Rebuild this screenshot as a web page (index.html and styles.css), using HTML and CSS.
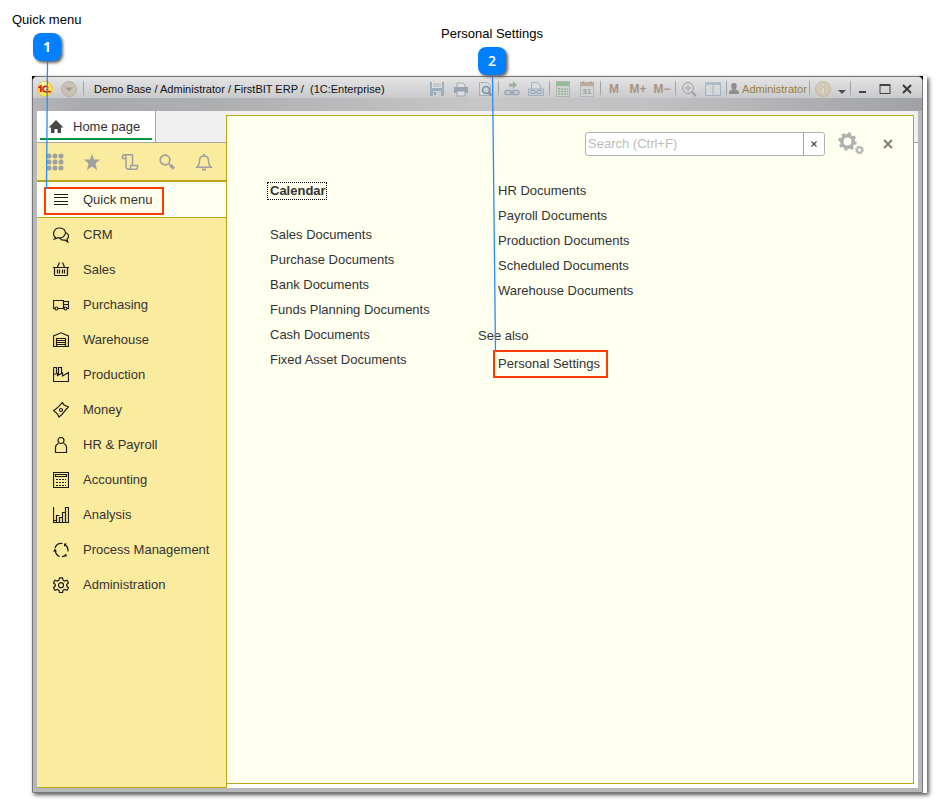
FILE: index.html
```html
<!DOCTYPE html>
<html lang="en">
<head>
<meta charset="utf-8">
<title>FirstBIT ERP - Quick menu</title>
<link rel="stylesheet" href="styles.css">
</head>
<body>
<div class="figure">
<div class="window">
  <header class="titlebar">
    <svg class="logo" width="16" height="16" viewBox="0 0 16 16"><circle cx="8" cy="8" r="7.5" fill="#fde64a" stroke="#e3c34a"/><circle cx="7" cy="5" r="4" fill="#fff39a"/><path d="M1.500 6.800L3.800 5.200V11" fill="none" stroke="#d8180c" stroke-width="1.800"/><path d="M11 6.800A2.700 2.700 0 1 0 8.500 10.700H14" fill="none" stroke="#d8180c" stroke-width="1.500"/><path d="M9 8.500h2.500" stroke="#d8180c"/></svg>
    <button class="round" aria-label="Main menu"><svg width="16" height="16" viewBox="0 0 16 16"><circle cx="8" cy="8" r="7.500" fill="#c9c1b4" stroke="#bbb3a5"/><path d="M4 6.500h8L8 10.500z" fill="#a59c90"/></svg></button>
    <span class="sep"></span>
    <h1 class="title">Demo Base / Administrator / FirstBIT ERP /&nbsp; (1C:Enterprise)</h1>
    <div class="tools">
      <button class="tool" aria-label="Save"><svg width="16" height="16" viewBox="0 0 16 16"><path d="M1 1h14v14H1z" fill="#8ea2b5"/><path d="M3 1h10v6H3z" fill="#dde1e5"/><path d="M4 3h8M4 5h8" stroke="#9aa8b5"/><path d="M4 10h8v5H4z" fill="#c9d0d7"/><path d="M5 11h2v3H5z" fill="#7d93a8"/></svg></button>
      <button class="tool" aria-label="Print"><svg width="16" height="16" viewBox="0 0 16 16"><path d="M4 2h6l2 2v3H4z" fill="#dfe2e5" stroke="#8d98a5"/><path d="M1 6h14v6H1z" fill="#8795a5"/><path d="M4 10h8v5H4z" fill="#dfe2e5" stroke="#8d98a5"/></svg></button>
      <button class="tool" aria-label="Preview"><svg width="16" height="16" viewBox="0 0 16 16"><path d="M2.500 1.500h8l3 3v10h-11z" fill="#d7dde3" stroke="#8fa2b5"/><circle cx="9" cy="9" r="3.500" fill="#c5d2dc" stroke="#65798b" stroke-width="1.500"/><path d="M11.500 11.500l3 3" stroke="#65798b" stroke-width="2"/></svg></button>
      <span class="sep"></span>
      <button class="tool" aria-label="Get link"><svg width="16" height="16" viewBox="0 0 16 16"><path d="M5 2.500h4V0l4 4-4 4V5.500H5z" fill="#8aa58a"/><rect x="1" y="9.500" width="7" height="4" rx="2" fill="none" stroke="#8797a8" stroke-width="1.500"/><rect x="8" y="9.500" width="7" height="4" rx="2" fill="none" stroke="#8797a8" stroke-width="1.500"/><path d="M5 11.500h6" stroke="#8797a8"/></svg></button>
      <button class="tool" aria-label="Go to link"><svg width="16" height="16" viewBox="0 0 16 16"><path d="M3.500 9V1.500h6l3 3V9" fill="#d9dfe5" stroke="#8fa2b5"/><path d="M.5 8h15v6.500H.5z" fill="#c6ced6" stroke="#8fa2b5"/><rect x="2.500" y="9.500" width="5" height="3" rx="1.500" fill="none" stroke="#7f90a2"/><rect x="8.500" y="9.500" width="5" height="3" rx="1.500" fill="none" stroke="#7f90a2"/></svg></button>
      <span class="sep"></span>
      <button class="tool" aria-label="Calculator"><svg width="14" height="16" viewBox="0 0 14 16"><path d="M.5.500h13v15H.5z" fill="#cbd5cf" stroke="#9fb0a6"/><path d="M0 1h14v4H0z" fill="#83b083"/><path d="M2 8h10M2 10.500h10M2 13h10" stroke="#7ba786" stroke-width="1.500" stroke-dasharray="2 1"/></svg></button>
      <button class="tool" aria-label="Calendar"><svg width="14" height="16" viewBox="0 0 14 16"><path d="M.5 1.500h13v14H.5z" fill="#d4d4d4" stroke="#a7adb3"/><path d="M0 1h14v4H0z" fill="#b59a84"/><path d="M3 0v3M11 0v3" stroke="#a08570"/><text x="7" y="13" class="cal">31</text></svg></button>
      <span class="sep"></span>
      <button class="tool mem">M</button>
      <button class="tool mem">M+</button>
      <button class="tool mem">M−</button>
      <span class="sep"></span>
      <button class="tool" aria-label="Zoom"><svg width="16" height="16" viewBox="0 0 16 16" fill="none" stroke="#8c8e90"><circle cx="7" cy="7" r="5.500"/><path d="M7 4v6M4 7h6"/><path d="M11 11l4 4" stroke-width="2"/></svg></button>
      <button class="tool" aria-label="Split panes"><svg width="16" height="16" viewBox="0 0 16 16"><path d="M.5 1.500h15v13H.5z" fill="#d5dade" stroke="#94aabd"/><path d="M0 1h16v3H0z" fill="#9db4c6"/><path d="M8 3v12" stroke="#94aabd"/></svg></button>
      <span class="sep"></span>
      <button class="user"><svg width="10" height="12" viewBox="0 0 10 12"><path d="M5 0c4 0 3 5 1.500 6.500C8 7.500 10 7.500 10 9.500V11H0V9.500c0-2 2-2 3.500-3C2 5 1 0 5 0z" fill="#8c8e90"/></svg>Administrator</button>
      <span class="sep"></span>
      <button class="tool" aria-label="Information"><svg width="16" height="16" viewBox="0 0 16 16"><circle cx="8" cy="8" r="7.500" fill="#d1c7b1" stroke="#c4b07c"/><path d="M7 3h3v2H7zM6 7h3.500l-1 5H10v1H6l1-5H6z" fill="#eee9dc" stroke="#b9a67c" stroke-width=".5"/></svg></button>
      <button class="drop" aria-label="More"><svg width="8" height="12" viewBox="0 0 8 12"><path d="M0 7h8L4 11z" fill="#4e4e52"/></svg></button>
      <span class="sep"></span>
      <button class="ctl" aria-label="Minimize"><svg width="12" height="12" viewBox="0 0 12 12"><path d="M2 9h7" stroke="#444" stroke-width="2"/></svg></button>
      <button class="ctl" aria-label="Maximize"><svg width="12" height="12" viewBox="0 0 12 12"><path d="M1 2.500h10v8H1z" fill="none" stroke="#444"/><path d="M.5 2h11" stroke="#444" stroke-width="2"/></svg></button>
      <button class="ctl" aria-label="Close window"><svg width="12" height="12" viewBox="0 0 12 12"><path d="M2 2l8 8M10 2l-8 8" stroke="#3c3c3c" stroke-width="2"/></svg></button>
    </div>
  </header>
  <div class="client">
    <div class="left">
      <div class="tabs"><a class="tab" href="#home"><svg width="16" height="14" viewBox="0 0 16 14"><path d="M8 0l7.500 7.500H13V13H9.500V9h-3v4H3V7.500H.5z" fill="#484848"/></svg><span>Home page</span></a></div>
      <aside class="sidebar">
        <div class="quick">
          <button aria-label="Sections"><svg width="18" height="18" viewBox="0 0 18 18"><path d="M3 3h.01M9 3h.01M15 3h.01M3 9h.01M9 9h.01M15 9h.01M3 15h.01M9 15h.01M15 15h.01" stroke="#a0a0a0" stroke-width="5" stroke-linecap="round"/></svg></button>
          <button aria-label="Favorites"><svg width="18" height="18" viewBox="0 0 18 18"><path d="M9 1l2 5.500h6l-4.500 4L14 17l-5-3.500L4 17l1.500-6.500L1 6.500h6z" fill="#a0a0a0"/></svg></button>
          <button aria-label="History"><svg width="18" height="18" viewBox="0 0 18 18" fill="none" stroke="#a0a0a0" stroke-width="1.500"><path d="M4.500 5.500H1.500V3.500Q1.500 1.800 3.200 1.800H11.500V13M3.200 1.800Q5 2 5 4V13.500Q5 16.200 7.500 16.200H14.500Q16.500 16 16.500 13.500V12.500H9.500V14.500Q9.300 16.200 7.500 16.200"/></svg></button>
          <button aria-label="Search"><svg width="18" height="18" viewBox="0 0 18 18" fill="none" stroke="#a0a0a0"><circle cx="7" cy="7" r="4.800" stroke-width="1.700"/><path d="M10.500 10.500l1.500 1.500" stroke-width="1.500"/><path d="M12 12l4 3.500" stroke-width="3"/></svg></button>
          <button aria-label="Notifications"><svg width="18" height="18" viewBox="0 0 18 18" fill="none" stroke="#a0a0a0" stroke-width="1.500"><path d="M2 14.200Q4.500 12 4.500 8Q4.500 3 9 3T13.500 8Q13.500 12 16 14.200Z"/><path d="M9 1v2M7 16.500h4" stroke-width="2"/></svg></button>
        </div>
        <nav class="nav">
          <a class="item current" href="#quick"><svg width="16" height="16" viewBox="0 0 16 16"><path d="M1 2.500h14M1 5.500h14M1 9.500h14M1 12.500h14"/></svg><span>Quick menu</span></a>
          <a class="item" href="#crm"><svg width="16" height="16" viewBox="0 0 16 16"><path d="M2.500 10.500C-1 8 .5 1 6.500 1s8 6 3.500 9c-2 1.200-4 1-5 .6L1.500 12zM12.500 5.500c3.500 1 4 5 1.500 6.500l.8 3-3-2c-2 .4-4-.2-4.800-1.800"/></svg><span>CRM</span></a>
          <a class="item" href="#sales"><svg width="16" height="16" viewBox="0 0 16 16"><path d="M0 5.500h16M1.500 5.500v7q0 1 1 1h11q1 0 1-1v-7M4.500 7.500v4M6.500 7.500v4M9.500 7.500v4M11.500 7.500v4M4.500 5L6.500.500M11.500 5L9.500.500"/></svg><span>Sales</span></a>
          <a class="item" href="#purchasing"><svg width="16" height="16" viewBox="0 0 16 16"><path d="M2 11.500H.5v-8h10v8H5M10.500 4.500h5v7H14M10.500 7.500h5M10.500 11.500h1"/><circle cx="3.500" cy="11.500" r="1.500"/><circle cx="12.500" cy="11.500" r="1.500"/></svg><span>Purchasing</span></a>
          <a class="item" href="#warehouse"><svg width="16" height="16" viewBox="0 0 16 16"><path d="M.5 15V4L8 .8 15.500 4v10.500h-3v-8h-9v8H0M3.500 8.500h9M3.500 10.500h9M3.500 12.500h9M3.500 14.500h9"/></svg><span>Warehouse</span></a>
          <a class="item" href="#production"><svg width="16" height="16" viewBox="0 0 16 16"><path d="M.5.500v14h15v-9L9.500 9V6L4.500 8.500v-2l-4 1M.5.500h3V6M5.500 8V.5h3V6"/></svg><span>Production</span></a>
          <a class="item" href="#money"><svg width="16" height="16" viewBox="0 0 16 16"><path d="M.5 8.500C4 7 6 4 9.500.500L11 3l4.500 2c-3 2-5 7-9.500 10L4.500 12z"/><circle cx="8" cy="8" r="1.500"/><path d="M4 9v.01M12 6v.01"/></svg><span>Money</span></a>
          <a class="item" href="#hr"><svg width="16" height="16" viewBox="0 0 16 16"><circle cx="8" cy="3.500" r="3"/><path d="M5.500 6.500q-3 1-3 4v5h11v-5q0-3-3-4"/></svg><span>HR &amp; Payroll</span></a>
          <a class="item" href="#accounting"><svg width="16" height="16" viewBox="0 0 16 16"><path d="M.5.500h15v15H.5zM2.500 2.500h11v2h-11z"/><path d="M3 7.500h10M3 10.500h10M3 13.500h10" stroke-dasharray="2 1"/></svg><span>Accounting</span></a>
          <a class="item" href="#analysis"><svg width="16" height="16" viewBox="0 0 16 16"><path d="M.5 0v15.500h15V.500h-3v15M12.500 5.500h-3v10M9.500 10.500h-3v5M6.500 8.500h-3v7M.5 13.500h3"/></svg><span>Analysis</span></a>
          <a class="item" href="#process"><svg width="16" height="16" viewBox="0 0 16 16"><path d="M9.500 1.500Q4 .5 2 6M2 8.500Q3 13 6.500 14.500M9 14.700Q11.500 14.500 13 13M15 9.500Q15.500 5 12 2.500"/><path d="M0 9.500L2 6.500 4 9.500zM11 5V1.500h3zM14 14.500l-3-.5 2-2.500z" fill="#1c1c1c" stroke="none"/></svg><span>Process Management</span></a>
          <a class="item" href="#admin"><svg width="16" height="16" viewBox="0 0 16 16"><path d="M6.500.800h3l.5 2.400 1.500.9 2.500-.8 1.500 2.500-1.800 1.700v1.500l1.800 1.700-1.500 2.500-2.500-.8-1.500.9-.5 2.400h-3L6 13.300l-1.500-.9-2.500.8-1.500-2.500L2.300 9V7.500L.5 5.800 2 3.300l2.500.8L6 3.200z"/><circle cx="8" cy="8.200" r="2.500"/></svg><span>Administration</span></a>
        </nav>
      </aside>
    </div>
    <main class="panel">
      <div class="panelbar">
        <div class="search"><input type="text" aria-label="Search" placeholder="Search (Ctrl+F)"><button aria-label="Clear search"><svg width="6" height="6" viewBox="0 0 6 6"><path d="M.5.500l5 5M5.500.500l-5 5" stroke="#4a4a4a" stroke-width="1.200"/></svg></button></div>
        <button class="gears" aria-label="Settings"><svg width="26" height="24" viewBox="0 0 26 24" fill="none" stroke="#b0b0b0"><circle cx="9.500" cy="9.500" r="5.700" stroke-width="3.400"/><circle cx="9.500" cy="9.500" r="8" stroke-width="2.400" stroke-dasharray="3.140 3.140"/><circle cx="21.500" cy="18" r="2.600" stroke-width="1.600"/><circle cx="21.500" cy="18" r="3.800" stroke-width="1.200" stroke-dasharray="1.490 1.490"/></svg></button>
        <button class="close" aria-label="Close panel"><svg width="10" height="10" viewBox="0 0 10 10"><path d="M1 1l8 8M9 1L1 9" stroke="#7c7c74" stroke-width="1.800"/></svg></button>
      </div>
      <div class="columns">
        <ul class="list">
          <li class="first"><a class="focused" href="#calendar">Calendar</a></li>
          <li><a href="#d1">Sales Documents</a></li>
          <li><a href="#d2">Purchase Documents</a></li>
          <li><a href="#d3">Bank Documents</a></li>
          <li><a href="#d4">Funds Planning Documents</a></li>
          <li><a href="#d5">Cash Documents</a></li>
          <li><a href="#d6">Fixed Asset Documents</a></li>
        </ul>
        <section class="second">
          <ul class="list">
            <li><a href="#d7">HR Documents</a></li>
            <li><a href="#d8">Payroll Documents</a></li>
            <li><a href="#d9">Production Documents</a></li>
            <li><a href="#d10">Scheduled Documents</a></li>
            <li><a href="#d11">Warehouse Documents</a></li>
          </ul>
          <h2>See also</h2>
          <a class="marked" href="#personal">Personal Settings</a>
        </section>
      </div>
    </main>
  </div>
</div>
</div>
<div class="notes">
  <svg class="lines" width="100%" height="100%"><path d="M47.500 60L46.500 189M492.500 74L495.500 352" stroke="#2a8df5" stroke-width="1.300"/></svg>
  <div class="note one"><span>Quick menu</span><b>1</b></div>
  <div class="note two"><span>Personal Settings</span><b>2</b></div>
</div>
</body>
</html>
```
FILE: styles.css
```css
*, *::before { box-sizing: border-box; }
body {
  margin: 0;
  padding: 76px 9px 9px 32px;
  min-height: 100vh;
  position: relative;
  display: flex;
  background: #fff;
  color: #333;
  font: 13px/16px "Liberation Sans", Arial, sans-serif;
}
button { border: 0; padding: 0; margin: 0; background: none; font: inherit; color: inherit; }
button, a { display: flex; align-items: center; }
a { color: inherit; text-decoration: none; }
svg { display: block; flex: none; }
.figure {
  flex: 1;
  display: flex;
  padding-right: 4px;
  background:
    linear-gradient(#000, #000) 0 0 / 5px 5px no-repeat,
    linear-gradient(#000, #000) calc(100% - 4px) 0 / 5px 5px no-repeat,
    #fff;
  box-shadow: 2px 2px 4px #555;
}
.window {
  flex: 1;
  display: flex;
  flex-direction: column;
  border: 1px solid #777;
  border-radius: 5px 5px 0 0;
  padding: 0 4px 4px;
  background: linear-gradient(#cfcfcf, #b7b8ba 30px);
}
.titlebar {
  display: flex;
  align-items: flex-start;
  height: 34px;
  margin: 0 -4px;
  padding: 0 4px;
  border-radius: 4px 4px 0 0;
  background:
    linear-gradient(#e4e4e5, #c9cacc) 0 0 / 100% 21px no-repeat,
    linear-gradient(90deg, #b4b5b7, #a9aaad 6%, #adaeb0 20%, #c6c6c7 50%, #c2c2c4 68%, #a6a7aa 95%, #a0a1a4);
}
.titlebar > *, .tools > * { height: 24px; }
.titlebar .logo { height: 16px; margin-top: 4px; }
.round { margin-left: 8px; }
.sep { width: 1px; margin: 0 1px; background: linear-gradient(transparent 2px, #a2a2a4 6px, #a2a2a4 16px, transparent 20px); }
.round + .sep { margin-left: 6px; }
.title { margin: 0 0 0 9px; color: #111; font-size: 11px; font-weight: normal; line-height: 24px; white-space: nowrap; }
.tools { display: flex; margin-left: auto; }
.tool { width: 24px; justify-content: center; }
.tool svg { opacity: .75; }
.mem { color: #a89485; font-size: 12px; font-weight: bold; }
.cal { fill: #8c8c8c; font-size: 8px; font-weight: bold; text-anchor: middle; }
.user { width: 80px; justify-content: center; gap: 3px; color: #97803f; font-size: 11px; }
.drop { width: 14px; justify-content: center; }
.ctl { width: 22px; justify-content: center; }
.client {
  flex: 1;
  display: flex;
  background: linear-gradient(#f0f0f0 31px, #a5a5a5 31px, #a5a5a5 32px, #fff 32px);
}
.left { width: 190px; flex: none; display: flex; flex-direction: column; }
.tabs { height: 32px; border-bottom: 1px solid #a5a5a5; }
.tab { width: 119px; height: 31px; padding-left: 11px; gap: 9px; border-right: 1px solid #a5a5a5; background: linear-gradient(#009646, #009646) 3px 27px / 112px 2px no-repeat #fff; }
.sidebar { flex: 1; border-right: 1px solid #b9a41a; border-bottom: 1px solid #b9a41a; background: #fbeb9e; }
.quick { display: flex; justify-content: space-between; height: 39px; padding: 0 13px 0 9px; border-bottom: 2px solid #b9a41a; }
.item { height: 35px; padding-left: 16px; gap: 14px; }
.item svg { fill: none; stroke: #1c1c1c; stroke-width: 1.200; }
.current { height: 36px; margin-bottom: -1px; padding-left: 7px; border-bottom: 1px solid #b9a41a; background: #fffff0; gap: 0; }
.current::before { content: ""; width: 120px; height: 28px; border: 2px solid #ff3c00; margin: 3px -111px 0 0; }
.current span { margin-left: 14px; }
.panel { flex: 1; min-width: 0; margin: 4px 4px 4px -1px; border: 1px solid #b9a41a; background: #fffff0; }
.panelbar { display: flex; align-items: center; justify-content: flex-end; margin-top: 16px; padding-right: 20px; }
.search { display: flex; width: 240px; height: 24px; border: 1px solid #b3b3b3; border-radius: 3px; background: #fff; overflow: hidden; }
.search input { flex: 1; min-width: 0; border: 0; padding: 0 2px; font: inherit; background: none; outline: 0; }
.search input::placeholder { color: #bcbcbc; opacity: 1; }
.search button { width: 21px; justify-content: center; border-left: 1px solid #a5a5a5; }
.gears { margin-left: 13px; }
.close { margin-left: 19px; }
.columns { display: flex; padding: 22px 0 0 43px; }
.list { list-style: none; margin: 0; padding: 0; width: 228px; }
.list li { height: 25px; display: flex; align-items: center; white-space: nowrap; }
.list .first { margin-bottom: 19px; }
.focused { height: 18px; margin-left: -3px; padding: 0 0 0 2px; border: 1px dotted #000; font-weight: bold; }
.second h2 { margin: 20px 0 2px -20px; font-size: 13px; font-weight: normal; line-height: 25px; }
.marked { width: 115px; height: 28px; margin-left: -5px; padding-left: 3px; border: 2px solid #ff3c00; white-space: nowrap; }
.notes { position: absolute; inset: 0; pointer-events: none; color: #000; }
.lines { position: absolute; inset: 0; }
.note { position: absolute; }
.one { left: 12px; top: 12px; }
.two { left: 441px; top: 26px; }
.note b { display: block; width: 28px; height: 28px; margin: 5px 0 0 21px; border-radius: 8px; background: #0080ff; box-shadow: 2px 2px 3px #666; color: #fff; font: bold 14px/28px "Open Sans", sans-serif; text-align: center; }
.two b { margin-left: 37px; font-weight: 600; }
```
